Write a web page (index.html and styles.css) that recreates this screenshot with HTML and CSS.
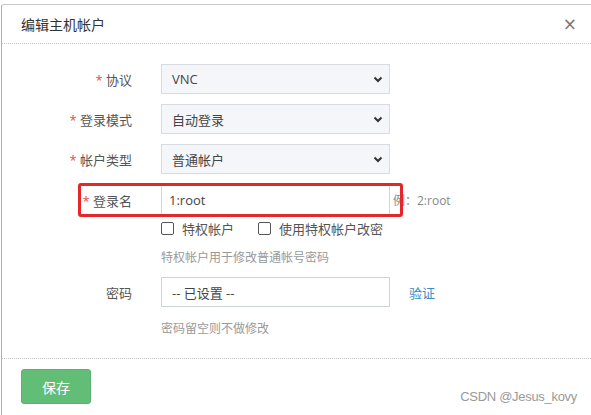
FILE: index.html
```html
<!DOCTYPE html>
<html lang="zh">
<head>
<meta charset="utf-8">
<title>编辑主机帐户</title>
<link rel="stylesheet" href="styles.css">
</head>
<body>
<div class="modal">
  <div class="modal-header">
    <span class="title">编辑主机帐户</span>
    <span class="close">×</span>
  </div>
  <div class="modal-body">
    <div class="row">
      <label class="lbl"><span class="req">*</span> 协议</label>
      <div class="select"><span>VNC</span><svg class="chev" width="10" height="7" viewBox="0 0 10 7"><polyline points="1.5,1.5 5,5 8.5,1.5" fill="none" stroke="#333" stroke-width="2"/></svg></div>
    </div>
    <div class="row">
      <label class="lbl"><span class="req">*</span> 登录模式</label>
      <div class="select"><span>自动登录</span><svg class="chev" width="10" height="7" viewBox="0 0 10 7"><polyline points="1.5,1.5 5,5 8.5,1.5" fill="none" stroke="#333" stroke-width="2"/></svg></div>
    </div>
    <div class="row">
      <label class="lbl"><span class="req">*</span> 帐户类型</label>
      <div class="select"><span>普通帐户</span><svg class="chev" width="10" height="7" viewBox="0 0 10 7"><polyline points="1.5,1.5 5,5 8.5,1.5" fill="none" stroke="#333" stroke-width="2"/></svg></div>
    </div>
    <div class="row row-name">
      <label class="lbl"><span class="req">*</span> 登录名</label>
      <div class="input name-input">1:root</div>
      <span class="example">例：2:root</span>
      <div class="mark"></div>
    </div>
    <div class="checks">
      <span class="check"><span class="box"></span>特权帐户</span>
      <span class="check"><span class="box"></span>使用特权帐户改密</span>
    </div>
    <div class="help help1">特权帐户用于修改普通帐号密码</div>
    <div class="row row-pw">
      <label class="lbl">密码</label>
      <div class="input pw-input">-- 已设置 --</div>
      <a class="verify">验证</a>
    </div>
    <div class="help help2">密码留空则不做修改</div>
  </div>
  <div class="modal-footer">
    <button class="save">保存</button>
  </div>
</div>
<div class="watermark">CSDN @Jesus_kovy</div>
</body>
</html>
```
FILE: styles.css
```css
html, body {
  margin: 0;
  padding: 0;
  background: #fff;
  height: 100%;
  overflow: hidden;
}
body {
  font-family: "Open Sans", "Noto Sans CJK SC", sans-serif;
  font-size: 13px;
  color: #555;
  position: relative;
}
.modal {
  margin: 4px 0 0 1px;
  border-top: 1px solid #c8c8c8;
  border-left: 1px solid #b0b0b0;
  border-top-left-radius: 3px;
  height: 420px;
}
.modal-header {
  height: 38px;
  border-bottom: 1px dotted #c4c4c4;
  display: flex;
  align-items: center;
  justify-content: space-between;
  padding: 0 14px 0 19px;
}
.title {
  font-size: 14px;
  color: #333;
  font-family: "Noto Sans CJK SC", sans-serif;
}
.close {
  font-size: 17px;
  color: #777;
  font-family: "DejaVu Sans", sans-serif;
  line-height: 1;
  margin-top: 1px;
}
.modal-body {
  padding: 20px 0 0 0;
}
.row {
  display: flex;
  align-items: center;
  height: 30px;
  margin-bottom: 10px;
  position: relative;
}
.lbl {
  width: 130px;
  text-align: right;
  margin-right: 29px;
  color: #555;
}
.req {
  color: #e54b4b;
}
.select {
  width: 229px;
  height: 30px;
  box-sizing: border-box;
  border: 1px solid #d9dbe2;
  background: #f5f6fa;
  display: flex;
  align-items: center;
  justify-content: space-between;
  padding: 0 6px 0 10px;
  color: #444;
}
.chev {
  display: block;
}
.row-name {
  margin-top: 11px;
  margin-bottom: 0;
}
.input {
  width: 229px;
  height: 30px;
  box-sizing: border-box;
  border: 1px solid #d2d6de;
  background: #fff;
  display: flex;
  align-items: center;
  padding: 0 10px;
  color: #444;
}
.name-input {
  border-top-color: #fff;
  border-bottom-color: #fff;
  padding-left: 7px;
  font-size: 13px;
}
.example {
  margin-left: 3px;
  color: #888;
  font-size: 12px;
}
.mark {
  position: absolute;
  left: 76px;
  top: -2px;
  width: 325px;
  height: 34px;
  box-sizing: border-box;
  border: 3px solid #e5262b;
  border-radius: 3px;
}
.checks {
  display: flex;
  align-items: center;
  height: 18px;
  margin: 4px 0 0 159px;
  color: #555;
}
.check {
  display: flex;
  align-items: center;
  margin-right: 24px;
}
.box {
  width: 11px;
  height: 11px;
  border: 1px solid #555;
  border-radius: 2px;
  margin-right: 8px;
}
.help {
  color: #999;
  margin-left: 159px;
  height: 20px;
  line-height: 20px;
  font-size: 12px;
}
.help1 {
  margin-top: 11px;
}
.row-pw {
  margin-top: 9px;
  margin-bottom: 0;
}
.pw-input {
  padding-left: 10px;
  border-color: #cfd3da;
}
.verify {
  margin-left: 19px;
  color: #3c8dbc;
  cursor: pointer;
}
.help2 {
  margin-top: 12px;
}
.modal-footer {
  margin-top: 19px;
  border-top: 1px dotted #c4c4c4;
  padding: 10px 0 0 19px;
}
.save {
  width: 70px;
  height: 35px;
  border: 1px solid #5cb070;
  border-radius: 3px;
  background: #62bd77;
  color: #fff;
  font-family: "Noto Sans CJK SC", sans-serif;
  font-size: 14px;
  padding: 0;
}
.watermark {
  position: absolute;
  right: 14px;
  top: 389px;
  font-family: "Liberation Sans", sans-serif;
  font-size: 13px;
  color: #999;
  letter-spacing: -0.3px;
}
```
